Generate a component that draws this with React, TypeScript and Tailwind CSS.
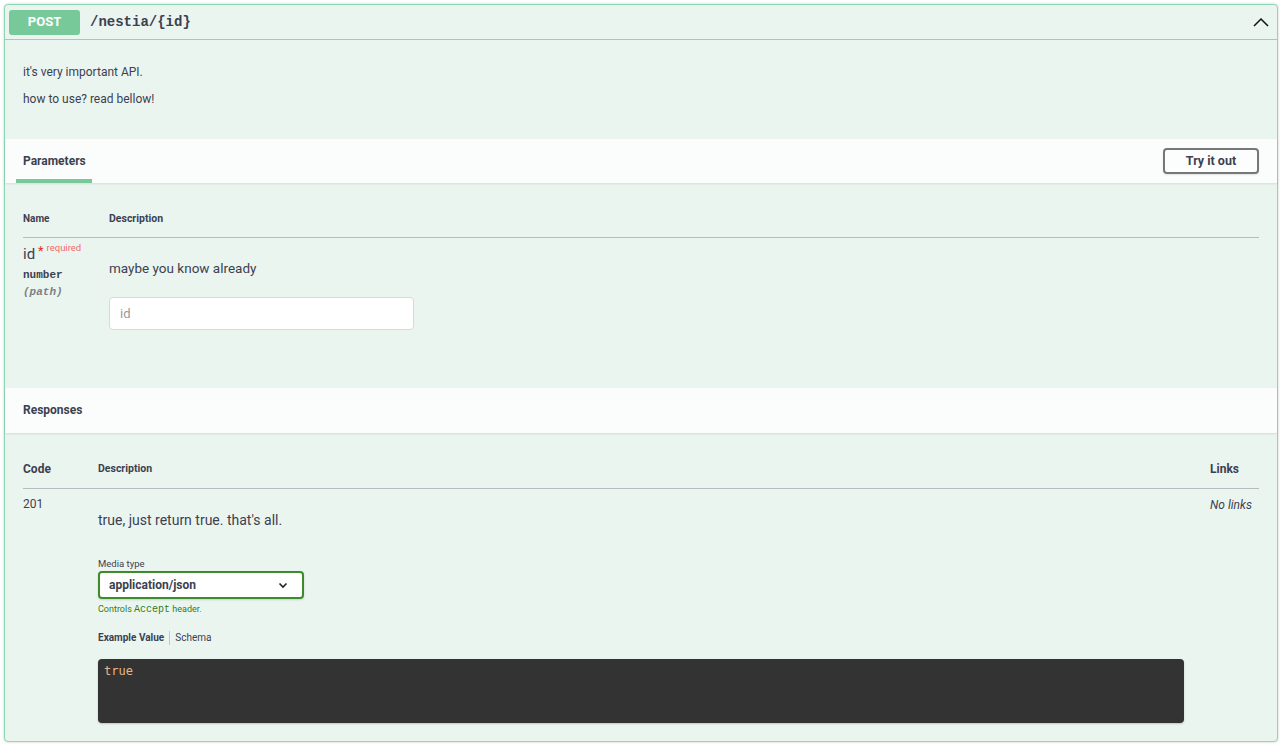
import React from 'react';

const sans = "font-['Roboto','Noto_Sans_CJK_KR',sans-serif]";
const mono = "font-['Liberation_Mono','DejaVu_Sans_Mono',monospace]";

const ChevronUp = () => (
  <svg width="20" height="20" viewBox="0 0 20 20" fill="none" stroke="#111" strokeWidth="1.5">
    <path d="M3 14 L10 7 L17 14" />
  </svg>
);

const ChevronDown = () => (
  <svg width="12" height="12" viewBox="0 0 12 12" fill="none" stroke="#222" strokeWidth="1.6">
    <path d="M2.5 4.5 L6 8 L9.5 4.5" />
  </svg>
);

export default function App() {
  return (
    <div className={`w-full bg-white pb-[4px] pl-[4px] pr-[2px] pt-[4px] text-[#3b4151] ${sans}`}>
      <div className="rounded-[4px] border border-[#8fd6b2] bg-[#ebf5f0] shadow-[0_0_3px_rgba(0,0,0,0.19)]">
        {/* Summary bar */}
        <div className="flex h-[35px] items-center border-b border-[#8fd6b2] pl-[4px] pr-[6px]">
          <span className="flex h-[25px] w-[71px] items-center justify-center rounded-[3px] bg-[#78c99a] text-[13px] font-bold text-white">
            POST
          </span>
          <span className={`ml-[10px] text-[14px] font-bold ${mono}`}>/nestia/{'{id}'}</span>
          <span className="ml-auto flex">
            <ChevronUp />
          </span>
        </div>

        {/* Description */}
        <div className="px-[18px] pb-[31px] pt-[23px] text-[12px] leading-[18px]">
          <p>it's very important API.</p>
          <p className="mt-[9px]">how to use? read bellow!</p>
        </div>

        {/* Parameters header */}
        <div className="flex h-[44px] items-stretch justify-between bg-[#fbfdfc] pl-[11px] pr-[18px] shadow-[0_1px_2px_rgba(0,0,0,0.1)]">
          <div className="flex flex-col justify-end">
            <span className="px-[7px] pb-[9px] text-[12px] font-bold">Parameters</span>
            <span className="h-[4px] w-[76px] bg-[#78c99a]" />
          </div>
          <div className="flex items-center">
            <button className="h-[26px] w-[96px] rounded-[4px] border-2 border-[#777] bg-white/40 text-[12.5px] font-bold text-[#3b4151] shadow-[0_1px_2px_rgba(0,0,0,0.1)]">
              Try it out
            </button>
          </div>
        </div>

        {/* Parameters table */}
        <div className="px-[18px] pb-[58px] pt-[28px]">
          <div className="flex border-b border-[#b6bbbf] pb-[10px] text-[10.5px] font-bold">
            <span className="w-[86px] text-[10px]">Name</span>
            <span>Description</span>
          </div>
          <div className="flex pt-[5px]">
            <div className="w-[86px]">
              <div className="flex items-start">
                <span className="text-[15px] leading-[22px]">id</span>
                <span className="ml-[3px] mt-[1px] text-[12px] font-bold leading-[14px] text-[#e53935]">*</span>
                <span className="ml-[3px] mt-[-1px] text-[9.5px] leading-[12px] text-[#f06a6a]">required</span>
              </div>
              <div className={`mt-[3px] text-[11px] font-bold leading-[14px] ${mono}`}>number</div>
              <div className={`mt-[3px] text-[11px] italic font-bold leading-[14px] text-[#808080] ${mono}`}>(path)</div>
            </div>
            <div className="pt-[16px]">
              <div className="text-[13.5px] leading-[18px]">maybe you know already</div>
              <div className="mt-[20px] flex h-[33px] w-[305px] items-center rounded-[4px] border border-[#d9d9d9] bg-white px-[10px] text-[13px] text-[#999]">
                id
              </div>
            </div>
          </div>
        </div>

        {/* Responses header */}
        <div className="flex h-[45px] items-center bg-[#fbfdfc] px-[18px] shadow-[0_1px_2px_rgba(0,0,0,0.1)]">
          <span className="text-[12px] font-bold">Responses</span>
        </div>

        {/* Responses table */}
        <div className="px-[18px] pb-[18px] pt-[27px]">
          <div className="flex items-center border-b border-[#b6bbbf] pb-[10px]">
            <span className="w-[75px] text-[12px] font-bold">Code</span>
            <span className="flex-1 text-[10.5px] font-bold">Description</span>
            <span className="w-[49px] text-[12px] font-bold">Links</span>
          </div>
          <div className="flex pt-[6px]">
            <span className="w-[75px] text-[12px] leading-[18px]">201</span>
            <div className="flex-1 pr-[26px]">
              <div className="mt-[16px] text-[14px] leading-[18px]">true, just return true. that's all.</div>
              <div className="mt-[28px] text-[9.5px] leading-[14px]">Media type</div>
              <div className="flex h-[28px] w-[206px] items-center justify-between rounded-[4px] border-2 border-[#3d8b2a] bg-white pl-[9px] pr-[13px] text-[12px] font-bold shadow-[0_1px_2px_rgba(0,0,0,0.15)]">
                <span>application/json</span>
                <ChevronDown />
              </div>
              <div className="mt-[3px] text-[9px] leading-[14px] text-[#2f7d17]">
                Controls <span className={`text-[10px] ${mono}`}>Accept</span> header.
              </div>
              <div className="mt-[14px] flex items-center text-[10px] leading-[14px]">
                <span className="font-bold">Example Value</span>
                <span className="mx-[5px] h-[14px] w-px bg-[#c5c9cc]" />
                <span>Schema</span>
              </div>
              <div className="mt-[14px] h-[64px] rounded-[4px] bg-[#333] px-[6px] py-[5px] text-[12px] leading-[14px] shadow-[0_1px_2px_rgba(0,0,0,0.2)]">
                <span className="font-['DejaVu_Sans_Mono',monospace] text-[#e6b889]">true</span>
              </div>
            </div>
            <span className="w-[49px] pt-[1px] text-[12px] italic leading-[18px]">No links</span>
          </div>
        </div>
      </div>
    </div>
  );
}
